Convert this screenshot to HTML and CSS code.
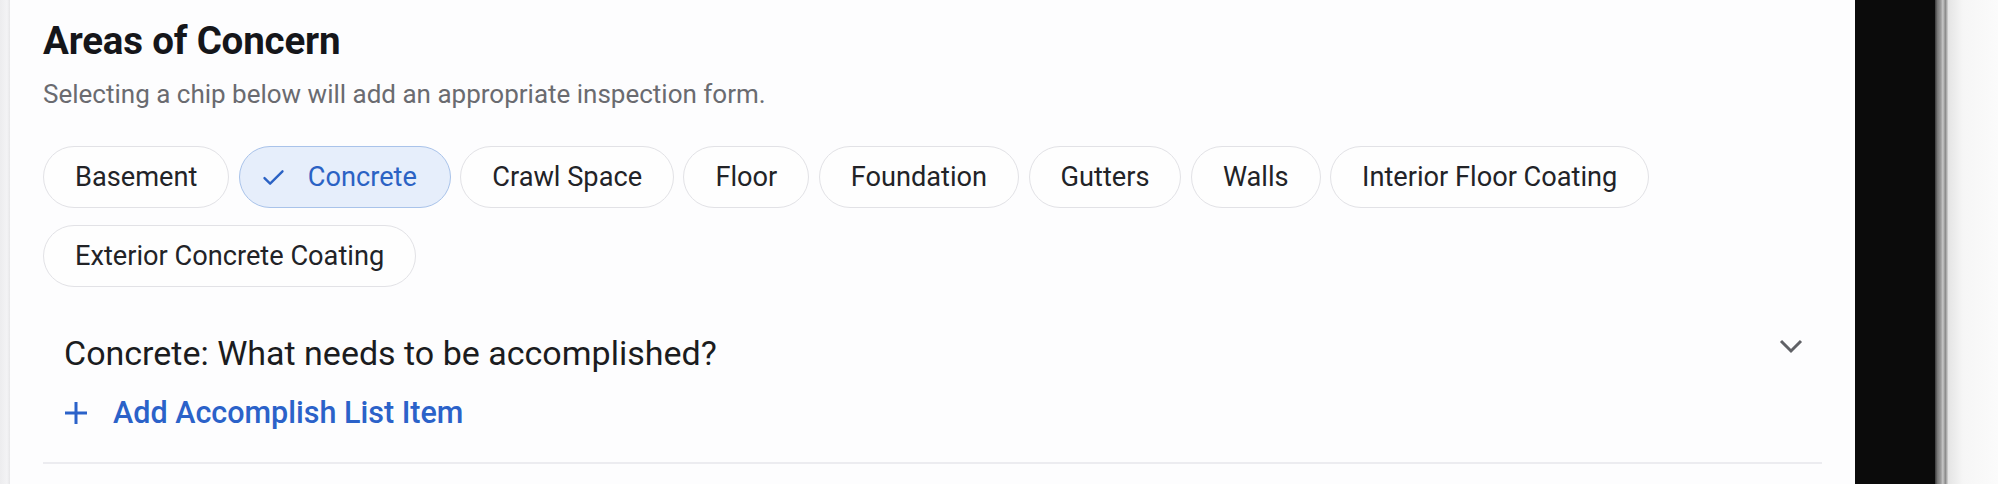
FILE: index.html
```html
<!DOCTYPE html>
<html>
<head>
<meta charset="utf-8">
<link rel="stylesheet" href="styles.css">
</head>
<body>
<div class="screen">
  <div class="edge-left"></div>
  <main class="panel">
    <h1 class="title">Areas of Concern</h1>
    <p class="subtitle">Selecting a chip below will add an appropriate inspection form.</p>
    <div class="chips">
      <button class="chip">Basement</button>
      <button class="chip chip-selected">
        <svg class="check" viewBox="0 0 24 24" width="27" height="27"><path d="M4 12.5l5 5L20 6.5" fill="none" stroke="currentColor" stroke-width="2.1" stroke-linecap="round" stroke-linejoin="round"/></svg>
        Concrete
      </button>
      <button class="chip">Crawl Space</button>
      <button class="chip">Floor</button>
      <button class="chip">Foundation</button>
      <button class="chip">Gutters</button>
      <button class="chip">Walls</button>
      <button class="chip">Interior Floor Coating</button>
      <button class="chip">Exterior Concrete Coating</button>
    </div>
    <section class="accordion">
      <div class="acc-head">
        <span class="question">Concrete: What needs to be accomplished?</span>
        <svg class="chevron" viewBox="0 0 24 16" width="24" height="16"><path d="M2 3l10 10L22 3" fill="none" stroke="currentColor" stroke-width="3"/></svg>
      </div>
      <button class="add-item">
        <svg class="plus" viewBox="0 0 24 24" width="24" height="24"><path d="M12 1v22M1 12h22" fill="none" stroke="currentColor" stroke-width="3"/></svg>
        <span>Add Accomplish List Item</span>
      </button>
    </section>
    <div class="divider"></div>
  </main>
  <div class="bezel"></div>
  <div class="rim"></div>
  <div class="outside"></div>
</div>
</body>
</html>
```
FILE: styles.css
```css
* { box-sizing: border-box; }
html, body { margin: 0; padding: 0; }
body {
  width: 1998px;
  height: 484px;
  overflow: hidden;
  font-family: Roboto, "Liberation Sans", sans-serif;
  background: #f4f4f4;
}
.screen {
  display: flex;
  height: 484px;
}
.edge-left {
  width: 10px;
  background: linear-gradient(to right, #ececee, #f3f3f5 70%, #e6e6e8);
}
.panel {
  width: 1845px;
  background: #fdfdfe;
  padding: 18px 33px 0 33px;
  display: flex;
  flex-direction: column;
}
.title {
  margin: 0;
  font-size: 38.5px;
  line-height: 46px;
  font-weight: 700;
  color: #15161a;
  letter-spacing: -0.2px;
}
.subtitle {
  margin: 14px 0 0;
  font-size: 26px;
  line-height: 32px;
  color: #6a6b70;
}
.chips {
  margin-top: 36px;
  display: flex;
  flex-wrap: wrap;
  column-gap: 9.4px;
  row-gap: 17px;
  width: 1700px;
}
.chip {
  height: 62px;
  padding: 0 31px;
  border: 1.5px solid #e2e2e6;
  border-radius: 31px;
  background: #fefefe;
  font-family: Roboto, "Liberation Sans", sans-serif;
  font-size: 27.2px;
  color: #222327;
  display: flex;
  align-items: center;
  gap: 21px;
}
.chip-selected {
  background: #e6eefb;
  border-color: #a9c3ea;
  color: #2b62c4;
  padding-left: 20px;
  padding-right: 33px;
}
.check { color: #2b62c4; }
.accordion {
  margin-top: 44px;
  padding-left: 21px;
}
.acc-head {
  display: flex;
  align-items: center;
  justify-content: space-between;
  padding-right: 19px;
}
.question {
  font-size: 34px;
  line-height: 44px;
  color: #1b1c20;
}
.chevron {
  color: #606166;
  margin-top: -14px;
}
.add-item {
  margin-top: 19px;
  padding: 0;
  border: 0;
  background: none;
  display: flex;
  align-items: center;
  gap: 25px;
  font-family: Roboto, "Liberation Sans", sans-serif;
  font-size: 30.5px;
  line-height: 38px;
  font-weight: 500;
  color: #2b62c9;
}
.plus { color: #2b62c9; }
.divider {
  margin-top: 30px;
  height: 2px;
  background: #ececf0;
}
.bezel {
  width: 80px;
  background: #0b0b0b;
}
.rim {
  width: 13px;
  background: linear-gradient(to right, #3a3a3a, #7a7a7a 20%, #9c9c9c 45%, #c8c8c8 60%, #8a8a8a 80%, #d6d6d6);
}
.outside {
  flex: 1;
  background: linear-gradient(to right, #e4e4e4, #f6f6f6 30%, #fbfbfb);
}
```
